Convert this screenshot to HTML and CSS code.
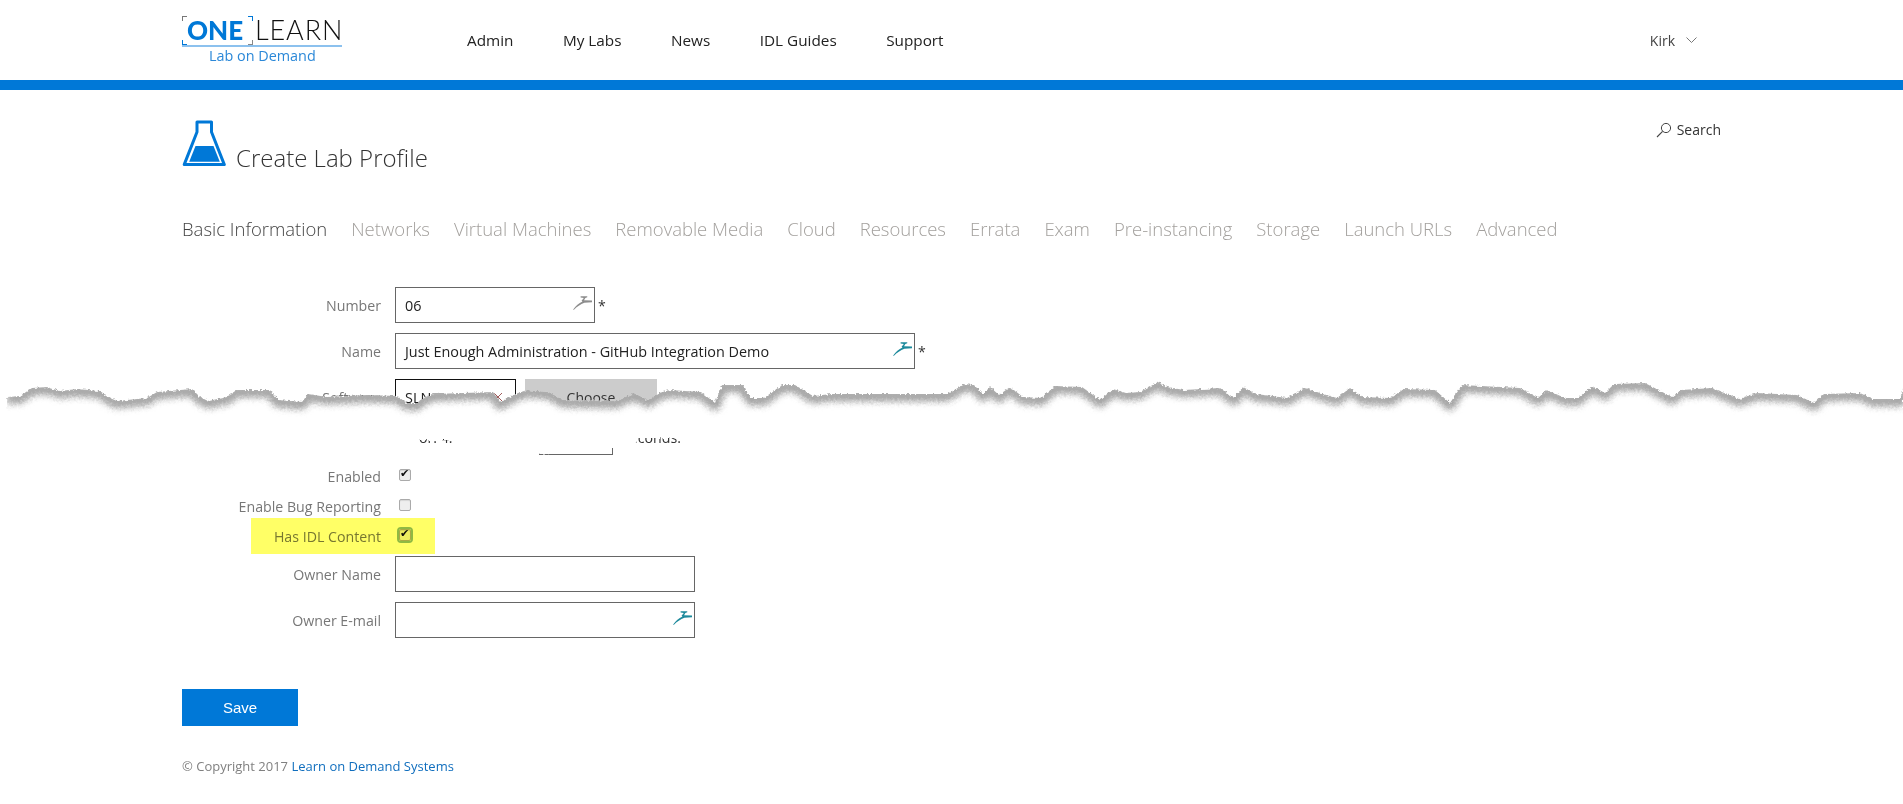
FILE: index.html
```html
<!DOCTYPE html>
<html lang="en">
<head>
<meta charset="utf-8">
<title>Create Lab Profile</title>
<link rel="stylesheet" href="styles.css">
</head>
<body>
<svg class="sprite" width="0" height="0" aria-hidden="true">
  <symbol id="dart" viewBox="0 0 20 14">
    <path d="M0 14 C3 10 6 7.4 10 5.5 L9 4.6 L11.4 1.7 L8 1.3 V0 H15 V1 L13 1.7 L11.6 4.2 L20 4.4 V6.2 L12 6.8 C8 8.5 4 11 1 14 Z" fill="currentColor"/>
  </symbol>
</svg>

<header class="topbar">
  <div class="topbar-inner">
    <a class="logo">
      <span class="logo-mark">
        <span class="logo-one">ONE</span>
        <i class="corner c-tl"></i><i class="corner c-bl"></i><i class="corner c-tr"></i><i class="corner c-br"></i>
      </span>
      <span class="logo-learn">LEARN</span>
      <span class="logo-sub">Lab on Demand</span>
    </a>
    <nav class="mainnav">
      <a>Admin</a><a>My Labs</a><a>News</a><a>IDL Guides</a><a>Support</a>
    </nav>
    <div class="user">
      <span>Kirk</span>
      <svg class="chev" viewBox="0 0 11 6" width="11" height="6"><path d="M.5 .5 L5.5 5.5 L10.5 .5" fill="none" stroke="#777" stroke-width="1"/></svg>
    </div>
  </div>
</header>

<main class="page">
  <div class="title-row">
    <svg class="flask" viewBox="0 0 44 47" width="44" height="47">
      <path d="M15 2 H29.5 V12 L42.3 44.6 H2.2 L15 12 Z" fill="none" stroke="#0078d7" stroke-width="3" stroke-linejoin="round"/>
      <path d="M13.5 26 H31.5 L37.8 41.8 H7.2 Z" fill="#0078d7"/>
    </svg>
    <h1 class="title">Create Lab Profile</h1>
    <a class="search">
      <svg viewBox="0 0 16 16" width="16" height="16"><circle cx="10" cy="6" r="4.6" fill="none" stroke="#444" stroke-width="1"/><path d="M6.6 9.4 L1 15" stroke="#444" stroke-width="1.1"/></svg>
      <span>Search</span>
    </a>
  </div>

  <nav class="tabs">
    <a class="tab active">Basic Information</a>
    <a class="tab">Networks</a>
    <a class="tab">Virtual Machines</a>
    <a class="tab">Removable Media</a>
    <a class="tab">Cloud</a>
    <a class="tab">Resources</a>
    <a class="tab">Errata</a>
    <a class="tab">Exam</a>
    <a class="tab">Pre-instancing</a>
    <a class="tab">Storage</a>
    <a class="tab">Launch URLs</a>
    <a class="tab">Advanced</a>
  </nav>

  <form class="form">
    <div class="row">
      <label class="lbl">Number</label>
      <div class="field w-num"><span class="val">06</span><svg class="dart grey"><use href="#dart"/></svg></div>
      <span class="req">*</span>
    </div>
    <div class="row">
      <label class="lbl">Name</label>
      <div class="field w-name"><span class="val">Just Enough Administration - GitHub Integration Demo</span><svg class="dart"><use href="#dart"/></svg></div>
      <span class="req">*</span>
    </div>
    <div class="row">
      <label class="lbl">Software</label>
      <div class="field w-sel focus"><span class="val">SLN-Demo</span>
        <svg class="clear" viewBox="0 0 10 10" width="10" height="10"><path d="M1 1 L9 9 M9 1 L1 9" stroke="#a05a5a" stroke-width="1"/></svg>
      </div>
      <button type="button" class="choose">Choose</button>
    </div>
    <div class="row row-frag">
      <label class="lbl"></label>
      <span class="frag-a">or. 4.</span>
      <div class="field w-frag"></div>
      <span class="frag-b">seconds.</span>
    </div>
    <div class="row row-check first">
      <label class="lbl">Enabled</label>
      <input class="check" type="checkbox" checked>
    </div>
    <div class="row row-check">
      <label class="lbl">Enable Bug Reporting</label>
      <input class="check" type="checkbox">
    </div>
    <div class="row row-check marked">
      <label class="lbl">Has IDL Content</label>
      <input class="check ring" type="checkbox" checked>
      <span class="highlight"></span>
    </div>
    <div class="row row-owner">
      <label class="lbl">Owner Name</label>
      <div class="field w-owner"></div>
    </div>
    <div class="row">
      <label class="lbl">Owner E-mail</label>
      <div class="field w-owner"><svg class="dart"><use href="#dart"/></svg></div>
    </div>
    <button type="button" class="save">Save</button>
  </form>

  <footer class="foot">© Copyright 2017 <a>Learn on Demand Systems</a></footer>
</main>

<svg class="tear" viewBox="0 370 1903 90" width="1903" height="90" aria-hidden="true">
  <defs>
    <clipPath id="tear-clip">
      <polygon points="7,397 20,396 32,388 47,387 60,391 77,389 100,391 110,398 117,401 147,398 157,392 192,389 200,397 208,401 227,397 237,390 270,390 278,400 302,402 308,394 327,397 367,395 397,396 407,403 417,403 423,398 433,394 493,392 500,402 518,393 527,390 549,392 563,400 616,401 634,393 648,400 659,393 670,390 701,392 715,403 722,385 742,385 751,398 764,398 782,385 795,385 813,396 831,394 947,394 965,384 974,385 983,394 990,387 999,395 1010,387 1023,397 1041,398 1055,386 1082,387 1100,400 1113,389 1126,393 1140,392 1158,382 1167,387 1184,390 1220,388 1234,398 1243,387 1256,394 1287,398 1305,388 1323,394 1337,398 1350,388 1363,397 1390,398 1404,389 1435,390 1450,403 1462,385 1520,388 1538,398 1547,390 1565,398 1578,398 1592,386 1605,393 1614,384 1645,383 1672,397 1681,390 1712,388 1739,399 1757,393 1797,395 1814,403 1824,394 1860,393 1873,399 1900,399 1903,388 1903,440 680,438 638,438 634,447 612,448 539,454 530,450 470,440 7,440"/>
    </clipPath>
    <filter id="rough" filterUnits="userSpaceOnUse" x="0" y="370" width="1903" height="90" color-interpolation-filters="sRGB">
      <feTurbulence type="fractalNoise" baseFrequency="0.42" numOctaves="2" seed="4"/>
      <feDisplacementMap in="SourceGraphic" scale="4" xChannelSelector="R" yChannelSelector="G"/>
    </filter>
    <filter id="soft" filterUnits="userSpaceOnUse" x="0" y="360" width="1903" height="100" color-interpolation-filters="sRGB">
      <feGaussianBlur stdDeviation="3.4"/>
    </filter>
  </defs>
  <g filter="url(#rough)">
    <g clip-path="url(#tear-clip)">
      <rect x="0" y="370" width="1903" height="90" fill="#fff"/>
      <polyline class="tear-shade" filter="url(#soft)" points="7,399 20,398 32,390 47,389 60,393 77,391 100,393 110,400 117,403 147,400 157,394 192,391 200,399 208,403 227,399 237,392 270,392 278,402 302,404 308,396 327,399 367,397 397,398 407,405 417,405 423,400 433,396 493,394 500,404 518,395 527,392 549,394 563,402 616,403 634,395 648,402 659,395 670,392 701,394 715,405 722,387 742,387 751,400 764,400 782,387 795,387 813,398 831,396 947,396 965,386 974,387 983,396 990,389 999,397 1010,389 1023,399 1041,400 1055,388 1082,389 1100,402 1113,391 1126,395 1140,394 1158,384 1167,389 1184,392 1220,390 1234,400 1243,389 1256,396 1287,400 1305,390 1323,396 1337,400 1350,390 1363,399 1390,400 1404,391 1435,392 1450,405 1462,387 1520,390 1538,400 1547,392 1565,400 1578,400 1592,388 1605,395 1614,386 1645,385 1672,399 1681,392 1712,390 1739,401 1757,395 1797,397 1814,405 1824,396 1860,395 1873,401 1900,401 1903,390"/>
    </g>
  </g>
</svg>
</body>
</html>
```
FILE: styles.css
```css
* { box-sizing: border-box; }
html, body { margin: 0; padding: 0; }
body {
  position: relative;
  height: 804px;
  overflow: hidden;
  background: #fff;
  color: #333;
  font-family: "Open Sans", "Noto Sans", sans-serif;
  font-size: 14.2px;
}
.sprite { position: absolute; }

/* top bar */
.topbar {
  height: 90px;
  border-bottom: 10px solid #0078d7;
}
.topbar-inner {
  display: flex;
  align-items: center;
  height: 80px;
  padding: 0 182px;
}
.logo {
  position: relative;
  display: grid;
  grid-template-columns: 73px 87px;
  width: 160px;
  height: 44px;
  margin-top: -4px;
  font-family: Lato, sans-serif;
}
.logo-mark { position: relative; display: block; height: 27px; }
.logo-one {
  position: absolute;
  left: 5px;
  top: -1px;
  font-size: 26px;
  line-height: 30px;
  font-weight: 900;
  color: #0078d7;
}
.logo-learn {
  font-size: 27px;
  line-height: 28px;
  font-weight: 300;
  letter-spacing: .9px;
  color: #111;
  white-space: nowrap;
}
.logo-sub {
  grid-column: 1 / 3;
  margin-top: 1px;
  padding-left: 27px;
  border-top: 2px solid #8cc1ee;
  font-family: "Open Sans", sans-serif;
  font-size: 14.4px;
  line-height: 17px;
  color: #2b88d8;
  white-space: nowrap;
}
.corner { position: absolute; width: 5px; height: 5px; border: 0 solid #0078d7; }
.c-tl { left: 0; top: 0; border-width: 1px 0 0 1px; border-color: #777; }
.c-bl { left: 0; bottom: -2px; border-width: 0 0 1px 1px; }
.c-tr { right: 2px; top: 0; border-width: 1px 1px 0 0; }
.c-br { right: 2px; bottom: -2px; border-width: 0 1px 1px 0; border-color: #888; }

.mainnav {
  display: flex;
  gap: 49.5px;
  margin-left: 125px;
  font-size: 15.3px;
  color: #222;
}
.user {
  display: flex;
  align-items: center;
  gap: 11px;
  margin-left: auto;
  margin-right: 24px;
  font-size: 14px;
  color: #444;
}

/* page */
.page { padding: 0 182px; }
.title-row {
  display: flex;
  align-items: flex-end;
  height: 77px;
  padding-top: 30px;
}
.flask { flex: none; margin-right: 10px; }
.title {
  margin: 0 0 -8px;
  font-size: 24px;
  line-height: 34px;
  font-weight: 300;
  color: #333;
}
.search {
  display: flex;
  align-items: center;
  gap: 5px;
  align-self: flex-start;
  margin-left: auto;
  font-size: 14px;
  color: #333;
}
.tabs {
  display: flex;
  gap: 24px;
  margin-top: 48px;
  font-size: 18.5px;
  line-height: 28px;
  font-weight: 300;
}
.tab { color: #a3a09d; white-space: nowrap; }
.tab.active { color: #444; }

/* form */
.form { margin-top: 44px; }
.row {
  position: relative;
  display: flex;
  align-items: center;
  gap: 14px;
  height: 36px;
  margin-bottom: 10px;
}
.lbl {
  flex: none;
  width: 199px;
  text-align: right;
  color: #777;
  white-space: nowrap;
}
.field {
  display: flex;
  align-items: center;
  justify-content: space-between;
  flex: none;
  height: 36px;
  padding: 0 2px 0 9px;
  border: 1px solid #666;
  background: #fff;
  color: #222;
}
.val { white-space: nowrap; font-size: 14.4px; }
.w-num { width: 200px; }
.w-name { width: 520px; }
.w-sel { width: 121px; padding-right: 12px; }
.w-owner { width: 300px; justify-content: flex-end; }
.w-frag { width: 74px; margin-left: 63px; }
.focus { border-color: #111; }
.req { margin-left: -11px; color: #333; }
.dart { width: 19px; height: 14px; flex: none; color: #1d8a9c; margin-top: -5px; }
.dart.grey { color: #8d8d8d; }
.choose {
  width: 132px;
  height: 36px;
  margin-left: -5px;
  border: 0;
  background: #ccc;
  color: #333;
  font: inherit;
  font-size: 14px;
}
.row-frag { margin-top: -6px; margin-bottom: 0; }
.frag-a { margin-left: 24px; width: 43px; white-space: nowrap; color: #333; }
.frag-b { margin-left: -4px; color: #333; }

.row-check { height: 30px; margin-bottom: 0; }
.row-check.first { margin-top: 6px; }
.row-owner { margin-top: 5px; }
.check {
  appearance: none;
  position: relative;
  flex: none;
  width: 12px;
  height: 12px;
  margin: -3px 0 0 4px;
  border: 1px solid #aaa;
  border-radius: 2px;
  background: #eee;
  box-shadow: inset 0 1px 1px rgba(0,0,0,.1);
}
.check:checked::after {
  content: "✔";
  position: absolute;
  left: 0;
  top: -2px;
  font: 11px/12px "DejaVu Sans", sans-serif;
  color: #111;
}
.check.ring { outline: 2px solid #8fb9a8; outline-offset: 0; }
.highlight {
  position: absolute;
  left: 69px;
  top: -3px;
  width: 184px;
  height: 36px;
  background: #ffff66;
  mix-blend-mode: multiply;
}
.save {
  display: block;
  width: 116px;
  height: 37px;
  margin-top: 51px;
  border: 0;
  background: #0078d7;
  color: #fff;
  font-family: "Liberation Sans", Arial, sans-serif;
  font-size: 15px;
}
.foot {
  margin-top: 31px;
  font-size: 13px;
  line-height: 18px;
  color: #808080;
}
.foot a { color: #106ebe; }

/* torn-paper overlay */
.tear {
  position: absolute;
  left: 0;
  top: 370px;
  overflow: hidden;
}
.tear-shade {
  fill: none;
  stroke: #a4a4a4;
  stroke-width: 11;
  stroke-linejoin: round;
}
```
